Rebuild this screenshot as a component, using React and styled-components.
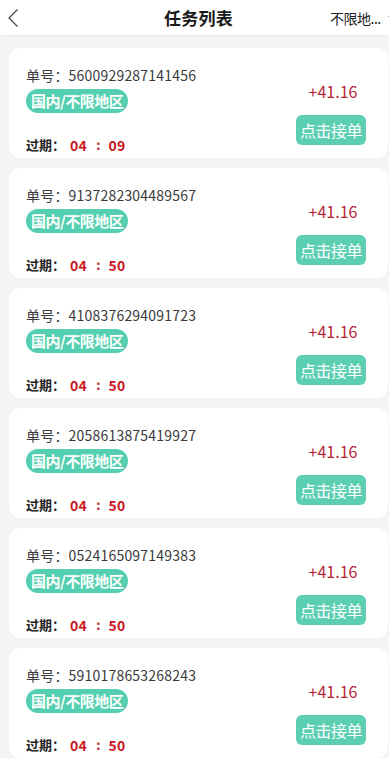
import React from "react";
import styled, { createGlobalStyle } from "styled-components";

const TASKS = [
  { id: "5600929287141456", sec: "09" },
  { id: "9137282304489567", sec: "50" },
  { id: "4108376294091723", sec: "50" },
  { id: "2058613875419927", sec: "50" },
  { id: "0524165097149383", sec: "50" },
  { id: "5910178653268243", sec: "50" },
];

const App = () => {
  return (
    <Page>
      <GlobalStyle />
      <Header>
        <BackButton>
          <svg width="12" height="20" viewBox="0 0 12 20" fill="none">
            <path d="M10.5 1.5 2 10l8.5 8.5" stroke="#444" strokeWidth="1.2" />
          </svg>
        </BackButton>
        <Title>任务列表</Title>
        <RegionPicker>
          不限地...
          <svg width="8" height="6" viewBox="0 0 8 6" fill="none">
            <path d="M1 1l3 3 3-3" stroke="#999" strokeWidth="1" />
          </svg>
        </RegionPicker>
      </Header>
      <List>
        {TASKS.map(task => (
          <Card key={task.id}>
            <Info>
              <OrderNo>单号：{task.id}</OrderNo>
              <Tag>国内/不限地区</Tag>
              <Expire>
                过期：
                <Time>04</Time>
                <Colon>:</Colon>
                <Time>{task.sec}</Time>
              </Expire>
            </Info>
            <Side>
              <Price>+41.16</Price>
              <TakeButton>点击接单</TakeButton>
            </Side>
          </Card>
        ))}
      </List>
    </Page>
  );
};

export default App;

const GlobalStyle = createGlobalStyle`
  html, body {
    margin: 0;
    padding: 0;
    background: #f5f5f5;
    font-family: "Noto Sans CJK SC", "Noto Sans", sans-serif;
  }
`;

const Page = styled.div`
  width: 389px;
  min-height: 758px;
  overflow: hidden;
  background: #f5f5f5;
`;

const Header = styled.header`
  display: flex;
  align-items: center;
  height: 35px;
  background: #fff;
  box-shadow: 0 2px 4px rgba(0, 0, 0, 0.03);
`;

const BackButton = styled.div`
  display: flex;
  align-items: center;
  width: 90px;
  padding-left: 7px;
  box-sizing: border-box;
`;

const Title = styled.h1`
  flex: 1;
  margin: 0;
  padding-right: 23px;
  text-align: center;
  font-size: 17px;
  font-weight: 700;
  color: #1a1a1a;
  letter-spacing: 0.3px;
`;

const RegionPicker = styled.div`
  display: flex;
  align-items: center;
  gap: 6px;
  width: 90px;
  margin-right: -31px;
  font-size: 14px;
  color: #222;
  white-space: nowrap;
  letter-spacing: -0.5px;
`;

const List = styled.div`
  display: flex;
  flex-direction: column;
  gap: 10px;
  padding: 13px 1px 0 9px;
`;

const Card = styled.div`
  display: flex;
  justify-content: space-between;
  height: 110px;
  padding: 0 22px 0 17px;
  border-radius: 10px;
  background: #fff;
  box-shadow: 0 1px 4px rgba(0, 0, 0, 0.03);
`;

const Info = styled.div`
  display: flex;
  flex-direction: column;
  align-items: flex-start;
  padding-top: 17px;
`;

const OrderNo = styled.div`
  font-size: 14px;
  line-height: 20px;
  color: #3a3a3a;
  letter-spacing: 0.2px;
`;

const Tag = styled.span`
  margin-top: 4px;
  height: 24px;
  padding: 0 5px;
  border-radius: 12px;
  background: #55cfb1;
  color: #fff;
  font-size: 15px;
  font-weight: 700;
  line-height: 24px;
  letter-spacing: -0.5px;
`;

const Expire = styled.div`
  display: flex;
  align-items: center;
  margin-top: 23px;
  font-size: 13px;
  font-weight: 700;
  line-height: 18px;
  color: #222;
`;

const Time = styled.span`
  margin-left: 5px;
  color: #c8171e;
  font-size: 14px;
  letter-spacing: 0.3px;
`;

const Colon = styled.span`
  margin: 0 3px 0 9px;
  color: #c8171e;
`;

const Side = styled.div`
  display: flex;
  flex-direction: column;
  align-items: center;
  padding-top: 33px;
`;

const Price = styled.div`
  font-size: 16px;
  line-height: 20px;
  color: #b8233a;
  margin-left: 4px;
`;

const TakeButton = styled.button`
  margin-top: 14px;
  width: 70px;
  height: 30px;
  padding: 0;
  border: none;
  border-radius: 6px;
  background: #5ccfb3;
  color: #fff;
  font-family: inherit;
  font-size: 16px;
  letter-spacing: -0.5px;
`;
